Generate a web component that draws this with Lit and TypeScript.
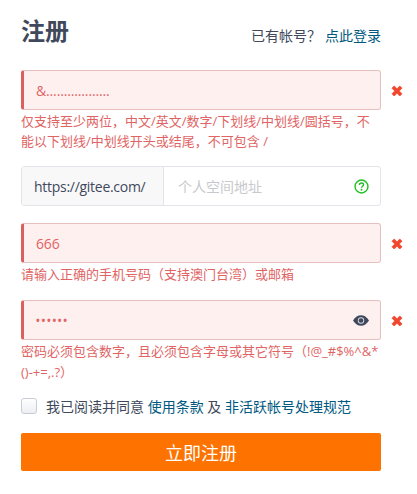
import { LitElement, html, css } from "lit";
import { customElement } from "lit/decorators.js";

const cross = html`<svg class="cross" viewBox="0 0 12 12" width="12" height="12"><path d="M1 3.200 3.200 1 6 3.800 8.800 1 11 3.200 8.200 6 11 8.800 8.800 11 6 8.200 3.200 11 1 8.800 3.800 6Z" fill="#f2472f" stroke="#f2472f" stroke-width="0.8" stroke-linejoin="round"/></svg>`;

@customElement("app-root")
export class AppRoot extends LitElement {
  static styles = css`
    :host { display: block; width: 417px; height: 494px; background: #fff; overflow: hidden; box-sizing: border-box; padding: 12px 0 0 21px;
      font-family: "Open Sans", "Noto Sans CJK SC", sans-serif; font-size: 14px; color: #40485b; }
    * { box-sizing: border-box; }
    .col { width: 360px; display: flex; flex-direction: column; }
    .head { display: flex; justify-content: space-between; align-items: flex-start; height: 38px; margin-bottom: 20px; }
    h1 { margin: 0; font-size: 24px; line-height: 38px; font-weight: 700; color: #40485b; }
    .have { font-size: 14px; line-height: 20px; margin-top: 14px; }
    a { color: #005980; text-decoration: none; }
    .have a { margin-left: 4px; }
    .wrap { position: relative; }
    .field { height: 40px; width: 360px; display: flex; align-items: center; padding: 0 11px 0 12px; background: #fff0f0; border: 1px solid #e8bfbf; border-left: 3px solid #db5f5f; border-radius: 3px; color: #e06464; font-size: 14px; letter-spacing: -0.15px; justify-content: space-between; }
    .cross { position: absolute; right: -22px; top: 15px; }
    .err { color: #e06464; font-size: 13px; line-height: 20.5px; margin-top: 1px; }
    .err.tight { line-height: 20px; }
    .url { height: 40px; display: flex; border: 1px solid #e3e4e9; border-radius: 3px; margin: 15px 0 17px; }
    .pre { width: 142px; background: #f8f8f9; border-right: 1px solid #e3e4e9; color: #40485b; display: flex; align-items: center; padding-left: 12px; font-size: 14px; letter-spacing: -0.28px; white-space: nowrap; }
    .ph { flex: 1; display: flex; align-items: center; justify-content: space-between; padding: 0 11px 0 14px; color: #c8c9cc; }
    .gap { height: 15.5px; }
    .dots { letter-spacing: 1.7px; font-size: 10px; font-weight: 700; }
    .agree { display: flex; align-items: center; margin-top: 14px; height: 20px; font-size: 14px; white-space: nowrap; }
    .box { width: 16px; height: 16px; border: 1px solid #c9ccd6; border-radius: 3px; background: linear-gradient(#fff, #eceef3); margin-right: 9px; flex: none; }
    .btn { margin-top: 17px; height: 38px; background: #fe7300; color: #fff; font-size: 18px; border: none; border-radius: 2px; display: flex; align-items: center; justify-content: center; }
  `;

  render() {
    return html`<div class="col">
      <div class="head"><h1>注册</h1><div class="have">已有帐号？<a>点此登录</a></div></div>
      <div class="wrap"><div class="field"><span>&amp;..................</span></div>${cross}</div>
      <div class="err tight">仅支持至少两位，中文/英文/数字/下划线/中划线/圆括号，不能以下划线/中划线开头或结尾，不可包含 /</div>
      <div class="url"><div class="pre">https://gitee.com/</div><div class="ph"><span>个人空间地址</span>
        <svg viewBox="0 0 16 16" width="15" height="15"><circle cx="8" cy="8" r="6.9" fill="none" stroke="#21c025" stroke-width="1.5"/><path d="M5.8 6.300C5.800 5 6.800 4.300 8 4.300S10.200 5 10.200 6.200C10.200 7.600 8 7.800 8 9.400" fill="none" stroke="#21c025" stroke-width="1.500"/><circle cx="8" cy="11.400" r="1" fill="#21c025"/></svg></div></div>
      <div class="wrap"><div class="field"><span>666</span></div>${cross}</div>
      <div class="err">请输入正确的手机号码（支持澳门台湾）或邮箱</div>
      <div class="gap"></div>
      <div class="wrap"><div class="field"><span class="dots">••••••</span>
        <svg viewBox="0 0 18 12" width="16" height="11"><path d="M0 6C2.500 2 5.500 0 9 0s6.500 2 9 6c-2.500 4-5.500 6-9 6S2.500 10 0 6Z" fill="#40485b"/><circle cx="9" cy="6" r="3.600" fill="#d9dade"/><circle cx="9" cy="6" r="2.600" fill="#40485b"/></svg></div>${cross}</div>
      <div class="err">密码必须包含数字，且必须包含字母或其它符号（!@_#$%^&amp;*()-+=,.?）</div>
      <div class="agree"><span class="box"></span><span>我已阅读并同意 <a>使用条款</a> 及 <a>非活跃帐号处理规范</a></span></div>
      <div class="btn">立即注册</div>
    </div>`;
  }
}
